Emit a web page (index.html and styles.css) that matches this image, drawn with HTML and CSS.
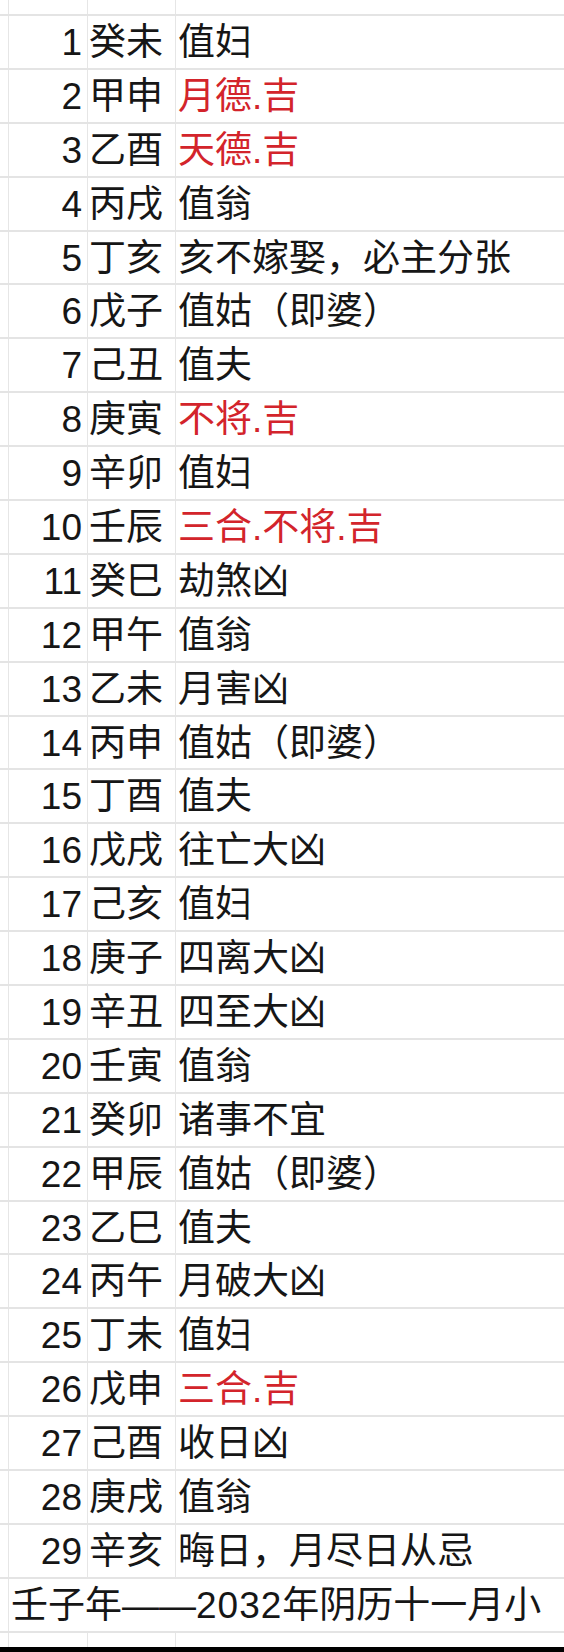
FILE: index.html
```html
<!DOCTYPE html>
<html lang="zh-CN">
<head>
<meta charset="utf-8">
<title>壬子年 2032年阴历十一月小</title>
<link rel="stylesheet" href="styles.css">
</head>
<body>
<div class="sheet">
  <div class="row head"><div class="c0"></div><div class="c1"></div><div class="c2"></div><div class="c3"></div></div>
  <div class="row"><div class="c0"></div><div class="c1">1</div><div class="c2">癸未</div><div class="c3">值妇</div></div>
  <div class="row"><div class="c0"></div><div class="c1">2</div><div class="c2">甲申</div><div class="c3 red">月德.吉</div></div>
  <div class="row"><div class="c0"></div><div class="c1">3</div><div class="c2">乙酉</div><div class="c3 red">天德.吉</div></div>
  <div class="row"><div class="c0"></div><div class="c1">4</div><div class="c2">丙戌</div><div class="c3">值翁</div></div>
  <div class="row"><div class="c0"></div><div class="c1">5</div><div class="c2">丁亥</div><div class="c3">亥不嫁娶，必主分张</div></div>
  <div class="row"><div class="c0"></div><div class="c1">6</div><div class="c2">戊子</div><div class="c3">值姑（即婆）</div></div>
  <div class="row"><div class="c0"></div><div class="c1">7</div><div class="c2">己丑</div><div class="c3">值夫</div></div>
  <div class="row"><div class="c0"></div><div class="c1">8</div><div class="c2">庚寅</div><div class="c3 red">不将.吉</div></div>
  <div class="row"><div class="c0"></div><div class="c1">9</div><div class="c2">辛卯</div><div class="c3">值妇</div></div>
  <div class="row"><div class="c0"></div><div class="c1">10</div><div class="c2">壬辰</div><div class="c3 red">三合.不将.吉</div></div>
  <div class="row"><div class="c0"></div><div class="c1">11</div><div class="c2">癸巳</div><div class="c3">劫煞凶</div></div>
  <div class="row"><div class="c0"></div><div class="c1">12</div><div class="c2">甲午</div><div class="c3">值翁</div></div>
  <div class="row"><div class="c0"></div><div class="c1">13</div><div class="c2">乙未</div><div class="c3">月害凶</div></div>
  <div class="row"><div class="c0"></div><div class="c1">14</div><div class="c2">丙申</div><div class="c3">值姑（即婆）</div></div>
  <div class="row"><div class="c0"></div><div class="c1">15</div><div class="c2">丁酉</div><div class="c3">值夫</div></div>
  <div class="row"><div class="c0"></div><div class="c1">16</div><div class="c2">戊戌</div><div class="c3">往亡大凶</div></div>
  <div class="row"><div class="c0"></div><div class="c1">17</div><div class="c2">己亥</div><div class="c3">值妇</div></div>
  <div class="row"><div class="c0"></div><div class="c1">18</div><div class="c2">庚子</div><div class="c3">四离大凶</div></div>
  <div class="row"><div class="c0"></div><div class="c1">19</div><div class="c2">辛丑</div><div class="c3">四至大凶</div></div>
  <div class="row"><div class="c0"></div><div class="c1">20</div><div class="c2">壬寅</div><div class="c3">值翁</div></div>
  <div class="row"><div class="c0"></div><div class="c1">21</div><div class="c2">癸卯</div><div class="c3">诸事不宜</div></div>
  <div class="row"><div class="c0"></div><div class="c1">22</div><div class="c2">甲辰</div><div class="c3">值姑（即婆）</div></div>
  <div class="row"><div class="c0"></div><div class="c1">23</div><div class="c2">乙巳</div><div class="c3">值夫</div></div>
  <div class="row"><div class="c0"></div><div class="c1">24</div><div class="c2">丙午</div><div class="c3">月破大凶</div></div>
  <div class="row"><div class="c0"></div><div class="c1">25</div><div class="c2">丁未</div><div class="c3">值妇</div></div>
  <div class="row"><div class="c0"></div><div class="c1">26</div><div class="c2">戊申</div><div class="c3 red">三合.吉</div></div>
  <div class="row"><div class="c0"></div><div class="c1">27</div><div class="c2">己酉</div><div class="c3">收日凶</div></div>
  <div class="row"><div class="c0"></div><div class="c1">28</div><div class="c2">庚戌</div><div class="c3">值翁</div></div>
  <div class="row"><div class="c0"></div><div class="c1">29</div><div class="c2">辛亥</div><div class="c3">晦日，月尽日从忌</div></div>
  <div class="row foot"><div class="c0"></div><div class="span">壬子年——<span class="num">2032</span>年阴历十一月小</div></div>
  <div class="row tail"><div class="c0"></div><div class="c1"></div><div class="c2"></div><div class="c3"></div></div>
  <div class="band"></div>
</div>
</body>
</html>
```

FILE: styles.css
```css
html, body {
  margin: 0;
  padding: 0;
  background: #ffffff;
}
body {
  width: 564px;
  height: 1652px;
  overflow: hidden;
  font-family: "Liberation Sans", "Noto Sans CJK SC", sans-serif;
  font-size: 37px;
  color: #161616;
}
.sheet {
  display: flex;
  flex-direction: column;
  height: 1652px;
}
.row {
  display: grid;
  grid-template-columns: 9px 79px 88px 1fr;
  box-sizing: border-box;
  height: 53.9px;
  flex: none;
  border-bottom: 2px solid #e4e4e4;
  line-height: 48.9px;
  white-space: nowrap;
}
.row.head {
  height: 16px;
}
.row.tail {
  height: 14px;
  border-bottom: none;
}
.c0, .c1, .c2, .c3, .span {
  box-sizing: border-box;
  min-width: 0;
  padding-top: 3px;
}
.row.head .c0, .row.head .c1, .row.head .c2, .row.head .c3,
.row.tail .c0, .row.tail .c1, .row.tail .c2, .row.tail .c3 {
  padding-top: 0;
}
.c0, .c1, .c2 {
  border-right: 1.5px solid #e6e6e6;
}
.c1 {
  text-align: right;
  padding-right: 5px;
}
.c2 {
  padding-left: 1px;
}
.c3 {
  padding-left: 2px;
}
.red {
  color: #d3242b;
}
.span {
  grid-column: 2 / -1;
  padding-left: 2px;
}
.num {
  letter-spacing: 1px;
}
.band {
  flex: 1;
  background: #000000;
}
```
